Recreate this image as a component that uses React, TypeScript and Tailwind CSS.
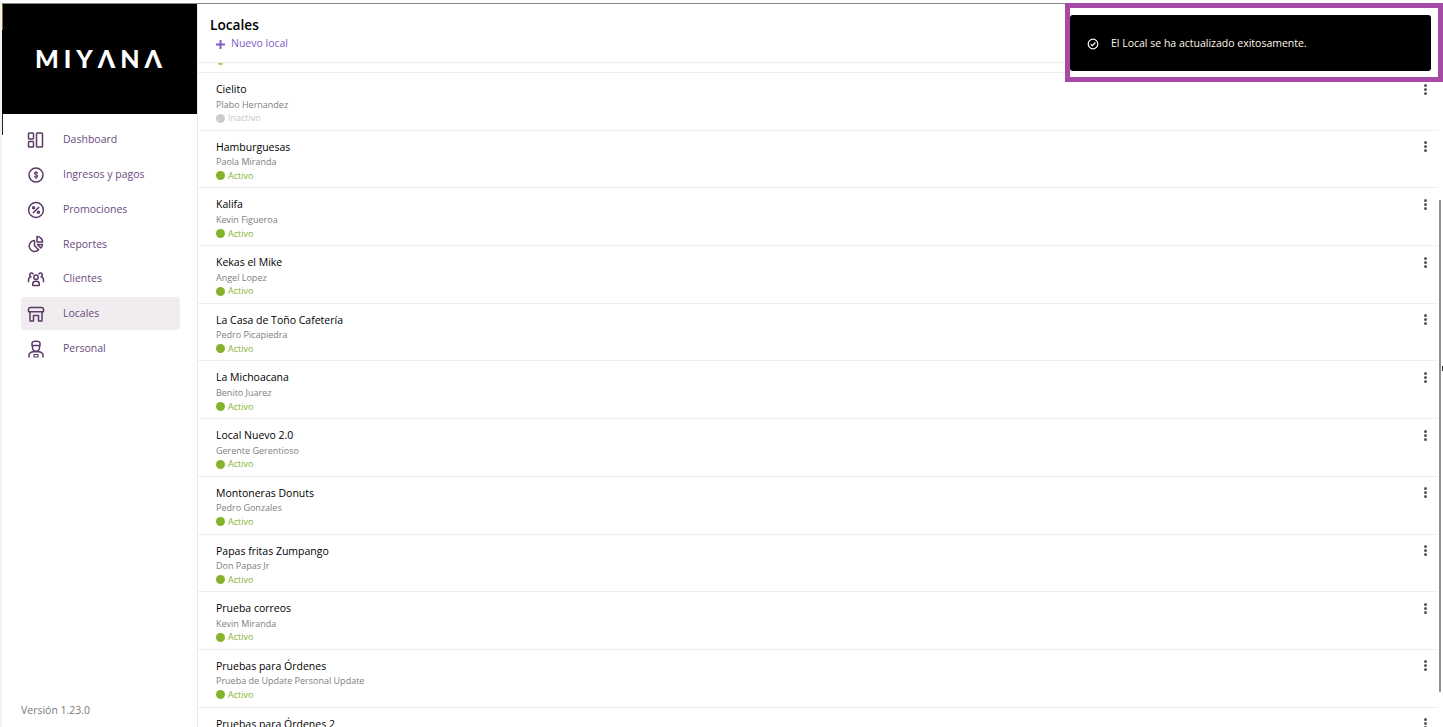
const font = { fontFamily: '"Open Sans", "Noto Sans", sans-serif' };

const rows = [
  { name: "Cielito", owner: "Plabo Hernandez", active: false },
  { name: "Hamburguesas", owner: "Paola Miranda", active: true },
  { name: "Kalifa", owner: "Kevin Figueroa", active: true },
  { name: "Kekas el Mike", owner: "Angel Lopez", active: true },
  { name: "La Casa de Toño Cafetería", owner: "Pedro Picapiedra", active: true },
  { name: "La Michoacana", owner: "Benito Juarez", active: true },
  { name: "Local Nuevo 2.0", owner: "Gerente Gerentioso", active: true },
  { name: "Montoneras Donuts", owner: "Pedro Gonzales", active: true },
  { name: "Papas fritas Zumpango", owner: "Don Papas Jr", active: true },
  { name: "Prueba correos", owner: "Kevin Miranda", active: true },
  { name: "Pruebas para Órdenes", owner: "Prueba de Update Personal Update", active: true },
  { name: "Pruebas para Órdenes 2", owner: "", active: true },
];

function Icon({ children }: { children: React.ReactNode }) {
  return (
    <svg
      width="18"
      height="18"
      viewBox="0 0 18 18"
      fill="none"
      stroke="#5b3a68"
      strokeWidth="1.5"
      strokeLinecap="round"
      strokeLinejoin="round"
    >
      {children}
    </svg>
  );
}

const nav: { label: string; active?: boolean; icon: React.ReactNode }[] = [
  {
    label: "Dashboard",
    icon: (
      <>
        <rect x="1.500" y="2" width="5" height="6" rx="0.8" />
        <rect x="1.500" y="10.500" width="5" height="5.500" rx="0.8" />
        <rect x="9.500" y="2" width="6" height="14" rx="0.8" />
      </>
    ),
  },
  {
    label: "Ingresos y pagos",
    icon: (
      <>
        <circle cx="9" cy="9" r="7" />
        <path d="M10.600 7.200c-.3-.6-.9-.9-1.600-.9-.9 0-1.500.5-1.500 1.200 0 1.700 3.200.8 3.200 2.600 0 .8-.7 1.300-1.700 1.300-.8 0-1.400-.3-1.700-1M9 5.300v7.400" strokeWidth="1.100" />
      </>
    ),
  },
  {
    label: "Promociones",
    icon: (
      <>
        <circle cx="9" cy="9" r="7.400" />
        <path d="M11.800 6.200l-5.600 5.600" />
        <circle cx="6.600" cy="6.800" r="1" />
        <circle cx="11.400" cy="11.200" r="1" />
      </>
    ),
  },
  {
    label: "Reportes",
    icon: (
      <>
        <path d="M7.500 5.500a5.500 5.500 0 1 0 4.200 9.300L7.500 10.800z" />
        <path d="M10 1.500a5.500 5.500 0 0 1 5.500 5.500H10z" />
        <path d="M10.500 9.500h5a5.500 5.500 0 0 1-1.700 3.400z" />
      </>
    ),
  },
  {
    label: "Clientes",
    icon: (
      <>
        <circle cx="9" cy="7.300" r="2.200" />
        <path d="M5.700 15.500v-1.600c0-1.500 1.300-2.700 3.300-2.700s3.300 1.200 3.300 2.700v1.600z" />
        <path d="M6 3.800a1.900 1.900 0 1 0-2.100 3C2.400 7.200 1.500 8.500 1.500 10v1.800" />
        <path d="M12 3.800a1.900 1.900 0 1 1 2.100 3c1.500.4 2.400 1.700 2.400 3.200v1.800" />
      </>
    ),
  },
  {
    label: "Locales",
    active: true,
    icon: (
      <>
        <path d="M3.500 2.500h11c1.200 0 2 .9 2 2v2.300h-15V4.500c0-1.100.8-2 2-2z" />
        <path d="M3 7v9h3.500v-5.500h5V16H15V7" />
      </>
    ),
  },
  {
    label: "Personal",
    icon: (
      <>
        <path d="M5 5.500V3.300C5 2.200 6.800 1.200 9 1.200s4 1 4 2.100v2.200z" />
        <path d="M5.500 5.700v2.100a3.500 3.500 0 0 0 7 0V5.700" />
        <path d="M2 17v-1.300c0-2 1.800-3.500 4-3.900h6c2.200.4 4 1.900 4 3.900V17" />
        <path d="M7 14.500h4V17H7z" strokeWidth="1.100" />
      </>
    ),
  },
];

function Dot({ active }: { active: boolean }) {
  return <span className={`w-[9px] h-[9px] rounded-full ${active ? "bg-[#86b22c]" : "bg-[#cccccc]"}`} />;
}

function Row({ name, owner, active }: { name: string; owner: string; active: boolean }) {
  return (
    <div className="h-[57.700px] shrink-0 border-b border-[#eeeeee] pl-[18px] pr-[11px] mr-[5px] pt-[8px] flex justify-between">
      <div>
        <p className="text-[10.500px] leading-[16px] text-black">{name}</p>
        <p className="text-[9px] leading-[14px] mt-[0.500px] text-[#808080]">{owner}</p>
        <div className="flex items-center gap-[3px] h-[13px]">
          <Dot active={active} />
          <span className={`text-[9px] ${active ? "text-[#86b22c]" : "text-[#c8c8c8]"}`}>
            {active ? "Activo" : "Inactivo"}
          </span>
        </div>
      </div>
      <div className="flex flex-col gap-[1px] pt-[2.500px]">
        <span className="w-[3px] h-[3px] rounded-full bg-[#555555]" />
        <span className="w-[3px] h-[3px] rounded-full bg-[#555555]" />
        <span className="w-[3px] h-[3px] rounded-full bg-[#555555]" />
      </div>
    </div>
  );
}

export default function App() {
  return (
    <div className="relative h-[727px] w-[1443px] overflow-hidden bg-white pt-[4px] pl-[2px] flex" style={font}>
      <div className="absolute top-[3px] left-[2px] w-full h-px bg-[#8a8a8a]" />
      <div className="absolute top-[3px] left-[2px] w-[1px] h-[27px] bg-[#8a6d1e]" />
      <div className="absolute top-[114px] left-[2px] w-[1px] h-[21px] bg-[#222222]" />
      <div className="absolute top-0 left-0 w-[2px] h-full bg-[#f2f2f2]" />

      <aside className="w-[196px] shrink-0 flex flex-col border-r border-[#e8e8e8]">
        <div className="h-[110px] bg-black flex items-center justify-center pb-[1px] pl-[3px]">
          <span className="text-white font-black text-[25px] tracking-[5px]" style={{ fontFamily: '"Lato", sans-serif' }}>
            MIYΛNΛ
          </span>
        </div>
        <nav className="flex-1 pl-[18.500px] pr-[17.500px] pt-[9.500px]">
          {nav.map((item) => (
            <div
              key={item.label}
              className={`h-[33px] mb-[1.800px] rounded-[4px] pl-[6px] flex items-center gap-[18.500px] ${item.active ? "bg-[#f0ecef]" : ""}`}
            >
              <Icon>{item.icon}</Icon>
              <span className="text-[10.500px] text-[#6a4a80]">{item.label}</span>
            </div>
          ))}
        </nav>
        <p className="pl-[19px] pb-[8px] text-[10.500px] text-[#7d7a78]">Versión 1.23.0</p>
      </aside>

      <main className="flex-1 flex flex-col min-w-0">
        <header className="h-[59px] shrink-0 pl-[12px] pt-[11px] border-b border-[#eeeeee]">
          <h1 className="text-[13.700px] leading-[20px] font-semibold text-black">Locales</h1>
          <div className="flex items-center gap-[5px] pl-[5px] h-[17px] mt-[0.500px]">
            <svg width="11" height="11" viewBox="0 0 11 11" stroke="#7a5cc4" strokeWidth="1.900">
              <path d="M5.500 1v9M1 5.500h9" />
            </svg>
            <span className="text-[10.500px] text-[#7a5cc4]">Nuevo local</span>
          </div>
        </header>
        <div className="h-[10px] shrink-0 border-b border-[#eeeeee] pl-[18px] overflow-hidden">
          <div className="ml-[2px] w-[5px] h-[2px] rounded-b-full bg-[#a9c86a]" />
        </div>
        {rows.map((r) => (
          <Row key={r.name} {...r} />
        ))}
      </main>

      <div className="absolute left-[1439px] top-[200px] w-[2px] h-[492px] bg-[#8f8f8f]" />
      <div className="absolute right-0 top-[366px] w-px h-[5px] bg-[#333333]" />

      <div className="absolute top-[3px] right-0 w-[378px] h-[79px] border-[5.500px] border-[#a64aa6] bg-white pt-[7px] pr-[7px]">
        <div className="h-[56px] bg-black rounded-[3px] flex items-center pl-[17px] pt-[2px] gap-[12px]">
          <svg width="12" height="12" viewBox="0 0 12 12" fill="none" stroke="#ffffff" strokeWidth="1.200">
            <circle cx="6" cy="6" r="4.800" />
            <path d="M3.800 6.200l1.600 1.500 3-3.200" />
          </svg>
          <span className="text-[10.500px] text-[#fff6e8]">El Local se ha actualizado exitosamente.</span>
        </div>
      </div>
    </div>
  );
}
